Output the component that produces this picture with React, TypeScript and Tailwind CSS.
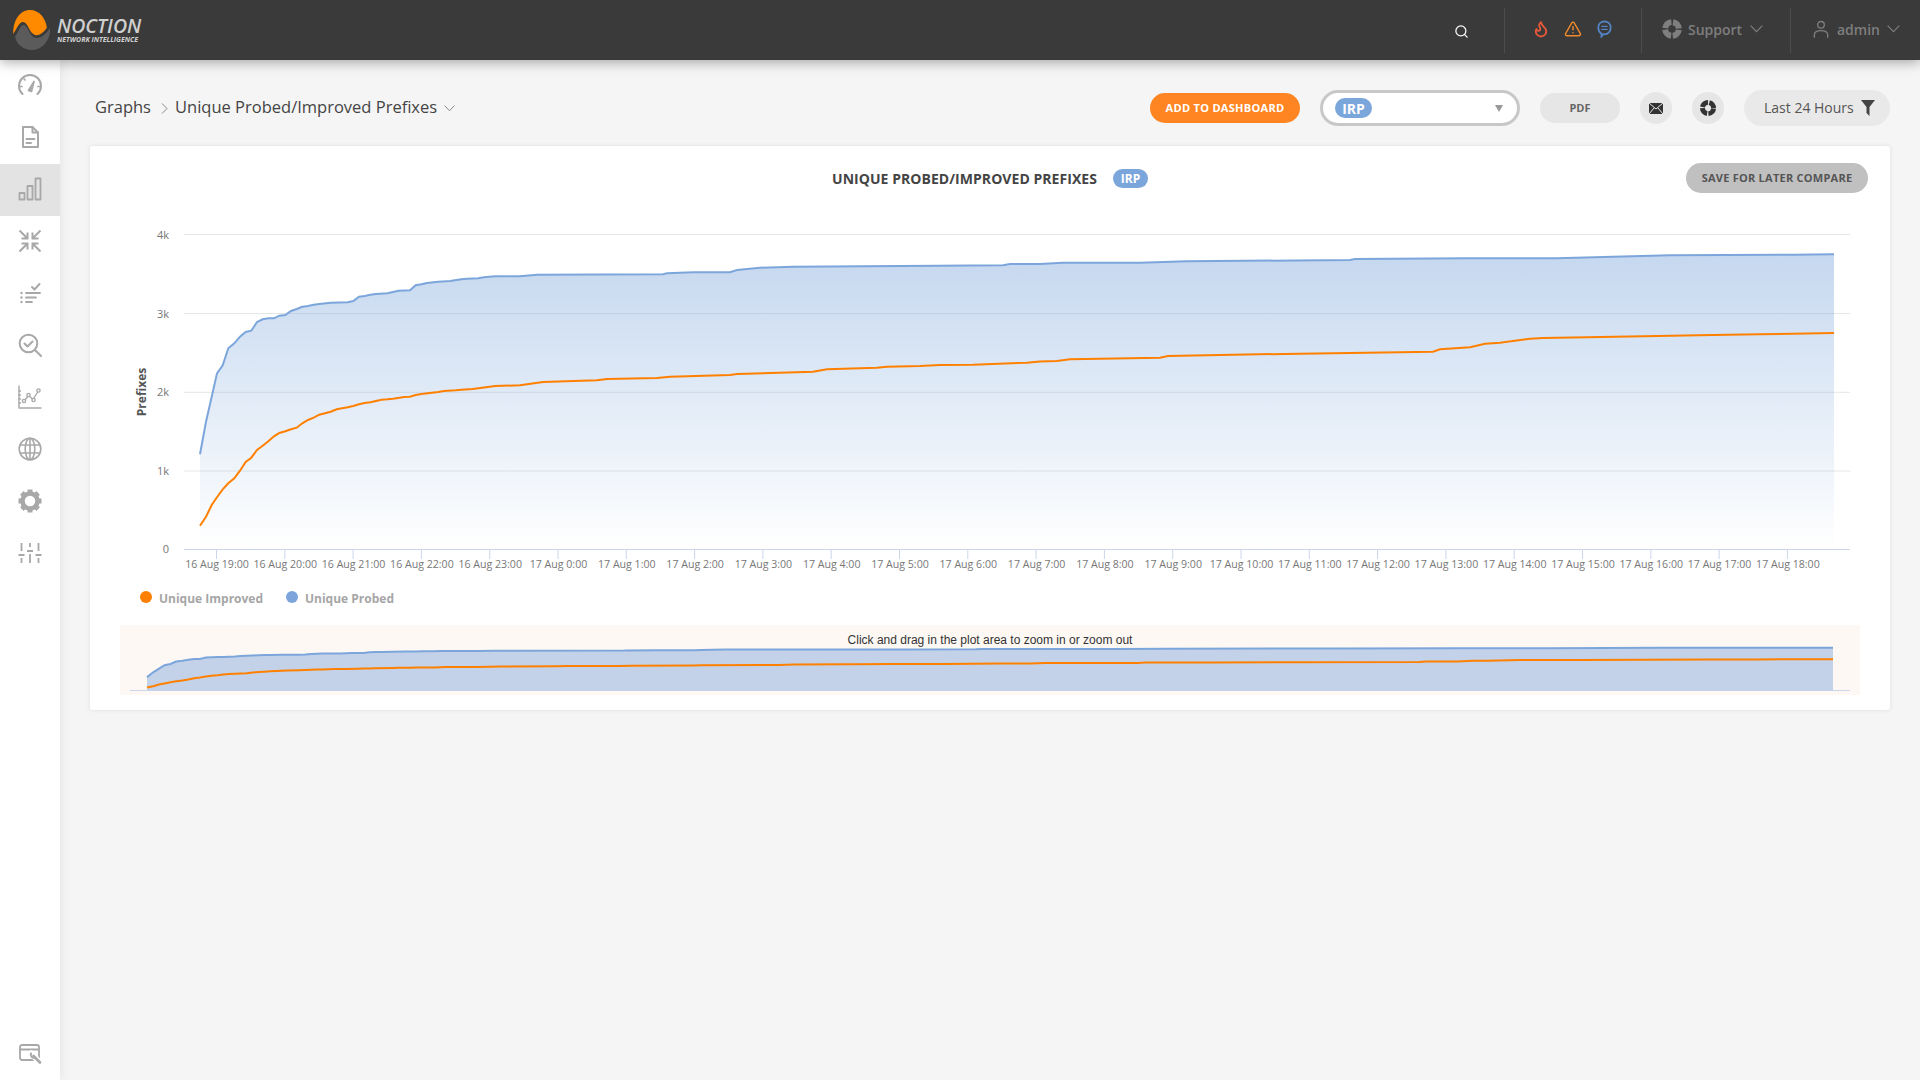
import { Flame, Search, TriangleAlert } from 'lucide-react';
import type { ReactNode } from 'react';

type Pt = [number, number];

// traced from the chart at 3x, first 400px of the plot
const fromTrace = (pts: Pt[]): Pt[] => pts.map(([x, y]) => [120 + x / 3, 220 + y / 3]);

const probed: Pt[] = [
  ...fromTrace([
    [240, 703], [258, 605], [275, 530], [291, 460], [308, 436], [325, 385], [343, 370], [360, 350],
    [377, 336], [394, 332], [411, 306], [428, 298], [445, 295], [462, 295], [478, 287], [496, 285],
    [513, 273], [530, 267], [547, 260], [564, 258], [581, 254], [598, 252], [632, 248], [683, 247],
    [700, 243], [717, 230], [734, 228], [751, 224], [768, 222], [802, 220], [819, 216], [836, 212],
    [870, 211], [887, 196], [904, 193], [921, 189], [955, 185], [990, 183], [1024, 178], [1041, 176],
    [1075, 175], [1092, 172], [1109, 170], [1126, 169], [1200, 169],
  ]),
  [537, 274.7], [663, 274.3], [667, 273.3], [693, 272.3], [730, 272.3], [737, 270], [760, 267.7],
  [793, 266.7], [937, 265.7], [1003, 265.3], [1010, 264], [1040, 264], [1063, 262.7], [1140, 262.7],
  [1187, 261.3], [1350, 260], [1355, 259], [1467, 258.3], [1557, 258.3], [1613, 256.7], [1670, 255.3],
  [1793, 254.7], [1834, 254.3],
];

const improved: Pt[] = [
  ...fromTrace([
    [240, 917], [258, 890], [275, 855], [291, 832], [308, 808], [325, 790], [343, 775], [360, 752],
    [377, 726], [394, 713], [411, 690], [428, 677], [445, 664], [462, 649], [478, 639], [496, 634],
    [513, 628], [530, 623], [547, 610], [564, 600], [581, 593], [598, 584], [632, 575], [650, 568],
    [683, 562], [700, 558], [717, 553], [734, 549], [751, 547], [785, 539], [802, 538], [819, 536],
    [853, 531], [870, 530], [887, 525], [904, 522], [955, 516], [972, 513], [1007, 511], [1024, 509],
    [1058, 507], [1075, 505], [1109, 500], [1126, 498], [1200, 496],
  ]),
  [543, 382], [597, 380.3], [607, 379], [657, 378], [670, 376.7], [730, 375], [737, 374], [813, 371.7],
  [827, 369.3], [877, 367.7], [887, 366.7], [920, 366], [940, 365], [973, 364.7], [1027, 362.7],
  [1040, 361.5], [1057, 361], [1070, 359.3], [1160, 357.7], [1168, 356], [1233, 354.7], [1300, 353.7],
  [1433, 351.7], [1440, 349.3], [1470, 347.3], [1485, 343.7], [1500, 342.7], [1530, 338.7], [1543, 338],
  [1587, 337.3], [1713, 335], [1760, 334.3], [1834, 333],
];

const toMini = (pts: Pt[]): Pt[] =>
  pts.map(([x, y]) => [147 + ((x - 200) * 1686) / 1634, 691 - (549 - y) * 0.147]);

const line = (pts: Pt[]) => pts.map(([x, y], i) => `${i ? 'L' : 'M'}${x.toFixed(1)} ${y.toFixed(1)}`).join(' ');

const hours = [
  ...[19, 20, 21, 22, 23].map((h) => `16 Aug ${h}:00`),
  ...Array.from({ length: 19 }, (_, h) => `17 Aug ${h}:00`),
];

function Icon({ children, size = 24, className }: { children: ReactNode; size?: number; className?: string }) {
  return (
    <svg
      width={size}
      height={size}
      viewBox="0 0 24 24"
      fill="none"
      stroke="currentColor"
      strokeWidth={1.7}
      strokeLinecap="round"
      strokeLinejoin="round"
      className={className}>
      {children}
    </svg>
  );
}

const sideIcons: ReactNode[] = [
  <>
    <path d="M4.5 21 A11 11 0 1 1 19.5 21" strokeWidth={2} />
    <path d="M10.5 17.5 L16 8.5 L13.5 18.5 Z" fill="currentColor" />
    <path d="M2.5 13.5h1.5M20 13.5h1.5M6 6l1 1" />
  </>,
  <>
    <path d="M5 2h9.5L20 7.5V22H5z" strokeWidth={2} />
    <path d="M14.5 2v5.5H20M8.5 14h8M8.5 18h4.5" strokeWidth={2} />
  </>,
  <>
    <rect x="1.5" y="16" width="5" height="6.5" strokeWidth={1.8} />
    <rect x="9.5" y="9" width="5" height="13.5" strokeWidth={1.8} />
    <rect x="17.5" y="1.5" width="5" height="21" strokeWidth={1.8} />
  </>,
  <g strokeWidth={2} strokeLinecap="butt" strokeLinejoin="miter">
    <path d="M1.5 1.500l7.500 7.500M3.500 9.500h6v-6M22.500 1.500l-7.500 7.500M20.500 9.500h-6v-6M1.500 22.500l7.500-7.500M3.500 14.500h6v6M22.500 22.500l-7.500-7.500M20.500 14.500h-6v6" />
  </g>,
  <>
    <path d="M14 6l2.5 2.5L21.5 3" strokeWidth={2} />
    <path d="M8 12h14M8 16.5h10M8 21h6" strokeWidth={1.8} />
    <circle cx="3.5" cy="12" r="1.2" fill="currentColor" stroke="none" />
    <circle cx="3.5" cy="16.5" r="1.2" fill="currentColor" stroke="none" />
    <circle cx="3.5" cy="21" r="1.2" fill="currentColor" stroke="none" />
  </>,
  <>
    <circle cx="10.5" cy="10.5" r="8.8" strokeWidth={2} />
    <path d="M17 17l6 6M6.5 10.5l3 3 5-5" strokeWidth={2} />
  </>,
  <g strokeWidth={1.4}>
    <path d="M1 1v22h22" />
    <path d="M1 6h1.5M1 10h1.5M1 14h1.5M1 18h1.5" />
    <path d="M6.5 15.5L10.5 10.5L15 14.5L20 6.5" />
    <circle cx="6" cy="16" r="1.6" fill="#fff" />
    <circle cx="10.5" cy="10" r="1.6" fill="#fff" />
    <circle cx="15.5" cy="15" r="1.6" fill="#fff" />
    <circle cx="20.5" cy="5.5" r="1.6" fill="#fff" />
  </g>,
  <g strokeWidth={1.6} strokeLinecap="butt">
    <circle cx="12" cy="12" r="10.8" />
    <ellipse cx="12" cy="12" rx="4.8" ry="10.8" />
    <path d="M12 1v22M1.5 8h21M1.5 16h21" />
  </g>,
  <>
    <circle cx="12" cy="12" r="7.5" strokeWidth={4.5} />
    {[0, 45, 90, 135, 180, 225, 270, 315].map((r) => (
      <rect key={r} x="9.5" y="0.5" width="5" height="4" fill="currentColor" stroke="none" transform={`rotate(${r} 12 12)`} />
    ))}
  </>,
  <g strokeWidth={1.8} strokeLinecap="butt">
    <path d="M3.5 2v8M3.5 17v5M12 2v4M12 13v9M20.5 2v8M20.5 17v5" />
    <path d="M0.5 14h6M9 10h6M17.5 14h6" />
  </g>,
];

// gaps sit at north, east, south and west
function LifeRing({ color, size }: { color: string; size: number }) {
  return (
    <svg width={size} height={size} viewBox="0 0 24 24" fill="none">
      <circle
        cx="12"
        cy="12"
        r="7.5"
        stroke={color}
        strokeWidth={6.5}
        strokeDasharray="9.98 1.8"
        transform="rotate(6.9 12 12)"
      />
    </svg>
  );
}

function Chevron({ width, className }: { width: number; className?: string }) {
  return (
    <svg width={width} height={width * 0.6} viewBox="0 0 10 6" fill="none" stroke="currentColor" strokeWidth={0.9} className={className}>
      <path d="M0.5 0.5L5 5.200L9.500 0.500" />
    </svg>
  );
}

function SideItem({ icon, active }: { icon: ReactNode; active?: boolean }) {
  return (
    <div className={`flex h-[52px] items-center justify-center pb-[2px] text-[#a8a8a8] ${active ? 'bg-[#e3e3e3]' : ''}`}>
      <Icon>{icon}</Icon>
    </div>
  );
}

function Badge({ className }: { className: string }) {
  return (
    <span className={`flex items-center justify-center rounded-full bg-[#7ba6dc] font-bold text-white ${className}`}>
      IRP
    </span>
  );
}

function Chart() {
  const mini = { probed: toMini(probed), improved: toMini(improved) };
  return (
    <svg width={1800} height={500} viewBox="90 210 1800 500" className="block">
      <defs>
        <linearGradient id="area" gradientUnits="userSpaceOnUse" x1="0" y1="254" x2="0" y2="549">
          <stop offset="0" stopColor="#7ca6db" stopOpacity={0.44} />
          <stop offset="1" stopColor="#7ca6db" stopOpacity={0} />
        </linearGradient>
      </defs>

      {[
        [234.5, '4k'],
        [313.5, '3k'],
        [392.3, '2k'],
        [471, '1k'],
      ].map(([y, label]) => (
        <g key={label}>
          <line x1="184" x2="1850" y1={y} y2={y} stroke="#e6e6e6" />
          <text x="169" y={Number(y) + 4} textAnchor="end" fontSize="11" fill="#777">
            {label}
          </text>
        </g>
      ))}
      <text x="169" y="553" textAnchor="end" fontSize="11" fill="#777">
        0
      </text>
      <line x1="184" x2="1850" y1="549.5" y2="549.5" stroke="#ccd6eb" />
      {hours.map((h, i) => {
        const x = 216.5 + i * 68.3;
        return (
          <g key={h}>
            <line x1={x} x2={x} y1="549" y2="559" stroke="#ccd6eb" />
            <text x={x + 0.5} y="568" textAnchor="middle" fontSize="10.6" fill="#777">
              {h}
            </text>
          </g>
        );
      })}
      <text
        transform="translate(146 392) rotate(-90)"
        textAnchor="middle"
        fontSize="12"
        fontWeight="700"
        fill="#555">
        Prefixes
      </text>

      <path d={`${line(probed)} L1834 549 L200 549 Z`} fill="url(#area)" />
      <path d={line(probed)} fill="none" stroke="#7ca6db" strokeWidth="2" />
      <path d={line(improved)} fill="none" stroke="#ff8000" strokeWidth="2" />

      <circle cx="146" cy="597" r="6" fill="#ff8000" />
      <text x="159" y="603" fontSize="12" fontWeight="700" fill="#a6a6a6">
        Unique Improved
      </text>
      <circle cx="292" cy="597" r="6" fill="#7ca6db" />
      <text x="305" y="603" fontSize="12" fontWeight="700" fill="#a6a6a6">
        Unique Probed
      </text>

      <rect x="120" y="625" width="1740" height="70" fill="#fdf8f4" />
      <line x1="130" x2="1850" y1="690.5" y2="690.5" stroke="#ccd6eb" />
      <path d={`${line(mini.probed)} L1833 691 L147 691 Z`} fill="#c3d2e8" />
      <path d={line(mini.probed)} fill="none" stroke="#7ca6db" strokeWidth="2" />
      <path d={line(mini.improved)} fill="none" stroke="#ff8000" strokeWidth="2" />
      <text
        x="990"
        y="644"
        textAnchor="middle"
        fontSize="12"
        fill="#333"
        fontFamily="'Liberation Sans', Arial, sans-serif">
        Click and drag in the plot area to zoom in or zoom out
      </text>
    </svg>
  );
}

export default function App() {
  return (
    <div className="flex h-screen flex-col overflow-hidden bg-[#f5f5f5] font-['Open_Sans',sans-serif]">
      <header className="relative z-20 flex h-[60px] shrink-0 items-center bg-[#3a3a3a] shadow-[0_2px_12px_rgba(0,0,0,0.35)]">
        <svg width="52" height="60" viewBox="0 0 52 60" className="shrink-0">
          <path d="M15 37 C18 33 20 25 23.5 25 C28 25 30 38 36 38 C42 38 47 33 50 28 C51 40 42 50 32 50 C24 50 17 45 15 37 Z" fill="#5b5b5b" />
          <path d="M13.3 34 C13 20 20 10 30 10 C39 10 46 18 46.8 28 C43 33 39 36 35 35 C29 33 28 22 23 22 C19 22 16 30 13.3 34 Z" fill="#ff8a00" />
        </svg>
        <div className="ml-[5px] flex flex-col text-[#d0d0d0] italic">
          <span className="text-[19.5px] leading-[19px] font-semibold">NOCTION</span>
          <span className="text-[7px] leading-[9px] font-bold whitespace-nowrap">NETWORK INTELLIGENCE</span>
        </div>

        <div className="ml-auto flex h-full items-center">
          <Search size={15} strokeWidth={2} className="mt-[2px] mr-[35px] text-white" />
          <div className="flex h-[45px] w-[137px] items-center border-l border-[#4c4c4c] pb-[2px] pl-[27px]">
            <Flame size={18} strokeWidth={2.4} className="text-[#e8593c]" />
            <TriangleAlert size={18} strokeWidth={2} className="ml-[14px] text-[#f28a2c]" />
            <svg width="15" height="18" viewBox="0 0 17 20" fill="none" stroke="#5484c4" strokeWidth="2" strokeLinecap="round" className="ml-[15px]">
              <path d="M8.5 1.5c4 0 7 2.8 7 7s-3 7.500-7 7.500c-.6 0-1 0-1.500-.1L5 18.500V15C2.800 13.800 1.500 11.500 1.500 8.500c0-4.200 3-7 7-7z" />
              <path d="M5.500 7h6M5.500 10.500h6" strokeWidth="1.400" />
            </svg>
          </div>
          <div className="flex h-[45px] w-[149px] items-center border-l border-[#4c4c4c] pb-[2px] pl-[19px] text-[#7e7e7e]">
            <LifeRing color="#7e7e7e" size={22} />
            <span className="ml-[5px] text-[14px] font-semibold">Support</span>
            <Chevron width={13} className="ml-[8px]" />
          </div>
          <div className="flex h-[45px] w-[130px] items-center border-l border-[#4c4c4c] pb-[2px] pl-[20px] text-[#7e7e7e]">
            <Icon size={20}>
              <circle cx="12" cy="7" r="4" strokeWidth={1.6} />
              <path d="M4 22v-3c0-3 3-5 8-5s8 2 8 5v3" strokeWidth={1.6} />
            </Icon>
            <span className="ml-[6px] text-[14px] font-semibold">admin</span>
            <Chevron width={13} className="ml-[7px]" />
          </div>
        </div>
      </header>

      <div className="flex min-h-0 flex-1">
        <aside className="relative z-10 flex w-[60px] shrink-0 flex-col bg-white shadow-[2px_0_10px_rgba(0,0,0,0.06)]">
          {sideIcons.map((icon, i) => (
            <SideItem key={i} icon={icon} active={i === 2} />
          ))}
          <div className="mt-auto flex h-[39px] items-start justify-center text-[#a8a8a8]">
            <Icon>
              <rect x="2" y="4" width="19" height="15" rx="2" strokeWidth={1.800} />
              <path d="M2 8.500h19" strokeWidth={1.800} />
              <path d="M13 12.500l9.500 9.500" stroke="#fff" strokeWidth={6} />
              <path d="M15.500 15l6.500 6.500" strokeWidth={2.600} />
              <path d="M13 12.500a3 3 0 0 0 4 4" strokeWidth={2} />
            </Icon>
          </div>
        </aside>

        <main className="min-w-0 flex-1 pt-[30px]">
          <div className="flex h-[36px] items-center pr-[30px] pl-[35px]">
            <span className="pb-[2px] text-[16.5px] text-[#444]">Graphs</span>
            <svg width="7" height="11" viewBox="0 0 7 11" fill="none" stroke="#888" strokeWidth="1" className="ml-[10px]">
              <path d="M1 0.500L6 5.500L1 10.500" />
            </svg>
            <span className="ml-[7px] pb-[2px] text-[16.5px] text-[#444]">Unique Probed/Improved Prefixes</span>
            <Chevron width={11} className="ml-[7px] text-[#888]" />

            <button className="ml-auto h-[30px] w-[150px] rounded-full bg-[#ff8522] text-[11px] font-bold tracking-[0.3px] text-white">
              ADD TO DASHBOARD
            </button>
            <div className="ml-[20px] flex h-[36px] w-[200px] items-center rounded-full border-[3px] border-[#c8c8c8] bg-white pr-[14px] pl-[12px]">
              <Badge className="h-[20px] w-[37px] text-[14px]" />
              <span className="ml-auto h-0 w-0 border-x-[4px] border-t-[7px] border-x-transparent border-t-[#999]" />
            </div>
            <button className="ml-[20px] h-[30px] w-[80px] rounded-full bg-[#e6e6e6] text-[11px] font-bold text-[#666]">
              PDF
            </button>
            <div className="ml-[20px] flex h-[32px] w-[32px] items-center justify-center rounded-full bg-[#e6e6e6]">
              <svg width="14" height="11" viewBox="0 0 14 11">
                <rect width="14" height="11" fill="#333" />
                <path d="M0 0l7 6 7-6M0 11l5-6M14 11L9 5" stroke="#e6e6e6" strokeWidth="1" fill="none" />
              </svg>
            </div>
            <div className="ml-[20px] flex h-[32px] w-[32px] items-center justify-center rounded-full bg-[#e6e6e6]">
              <LifeRing color="#333" size={18} />
            </div>
            <div className="ml-[20px] flex h-[36px] w-[146px] items-center rounded-full bg-[#e9e9e9] pb-[1px] pl-[20px]">
              <span className="text-[14px] text-[#555]">Last 24 Hours</span>
              <svg width="14" height="16" viewBox="0 0 14 16" className="ml-[7px]">
                <path d="M0 0h14L8.500 7v9L5.500 13V7z" fill="#444" />
              </svg>
            </div>
          </div>

          <section className="mt-[20px] ml-[30px] w-[1800px] rounded-[3px] bg-white shadow-[0_0_4px_rgba(0,0,0,0.1)]">
            <div className="relative flex h-[64px] items-center justify-center pt-[1px]">
              <span className="text-[14px] font-bold tracking-[0.05px] text-[#444]">UNIQUE PROBED/IMPROVED PREFIXES</span>
              <Badge className="ml-[16px] h-[19px] w-[35px] text-[12px]" />
              <button className="absolute top-[17px] right-[22px] h-[30px] w-[182px] rounded-full bg-[#c0c0c0] text-[11px] font-bold tracking-[0.25px] text-[#555]">
                SAVE FOR LATER COMPARE
              </button>
            </div>
            <Chart />
          </section>
        </main>
      </div>
    </div>
  );
}
